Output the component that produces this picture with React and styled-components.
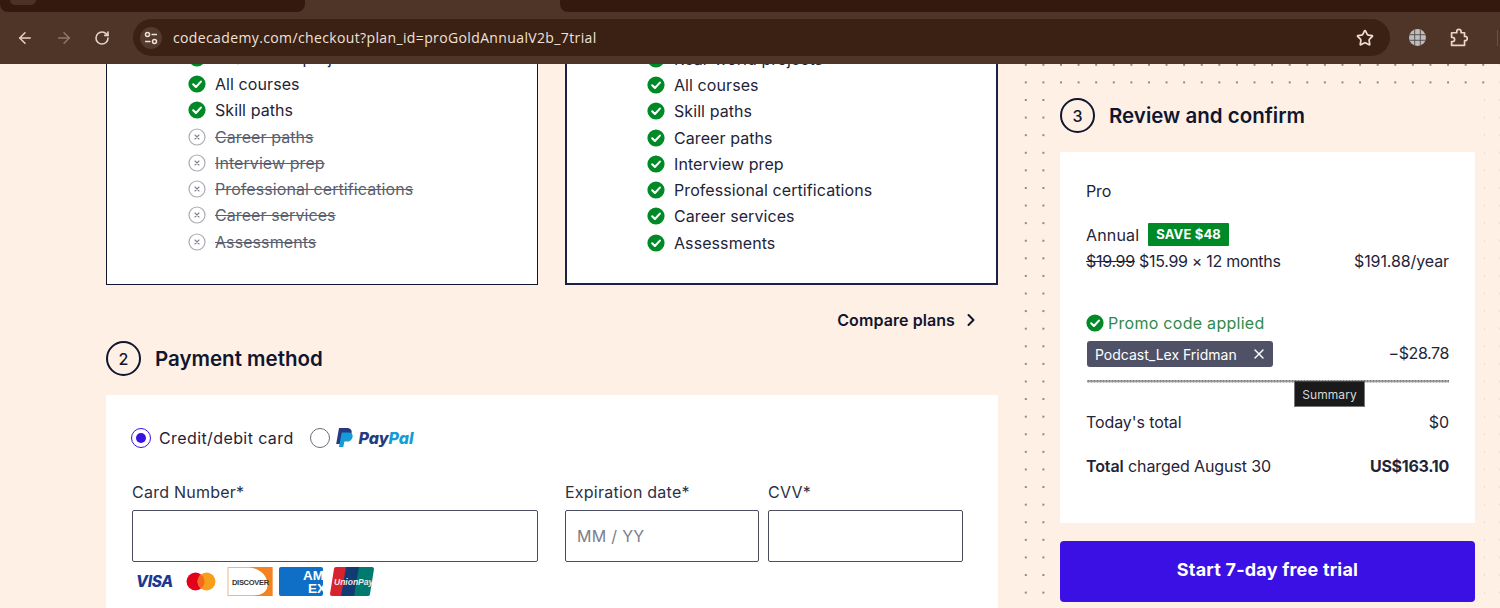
import React from "react";
import styled, { createGlobalStyle } from "styled-components";
import { ArrowLeft, ArrowRight, RotateCw, Star, ChevronRight, X } from "lucide-react";

const GlobalStyle = createGlobalStyle`
    html, body {
        margin: 0;
        height: 608px;
        overflow: hidden;
        background: #fff0e5;
    }
    * {
        box-sizing: border-box;
    }
`;

const Page = styled.div`
    width: 1500px;
    height: 608px;
    overflow: hidden;
    display: flex;
    flex-direction: column;
    font-family: Inter, "Noto Sans", sans-serif;
    font-size: 16px;
    color: #10162f;
`;

const TabStrip = styled.div`
    height: 12px;
    background: #4f3527;
    display: flex;
    flex-shrink: 0;
    overflow: hidden;
`;

const Tab = styled.div`
    width: ${(p) => p.$width}px;
    flex-shrink: 0;
    margin-left: ${(p) => p.$offset || 0}px;
    background: #341a0e;
    border-radius: 0 0 8px 8px;
`;

const TabButton = styled.div`
    width: 26px;
    height: 5px;
    margin-left: 10px;
    border-radius: 0 0 6px 6px;
    background: #4a3224;
`;

const Toolbar = styled.div`
    height: 52px;
    flex-shrink: 0;
    background: #4f3527;
    display: flex;
    align-items: center;
    padding: 0 0 1px 16px;
    color: #e8d3c6;
`;

const NavIcons = styled.div`
    display: flex;
    align-items: center;
    gap: 21px;
    width: 117px;
`;

const Omnibox = styled.div`
    width: 1257px;
    height: 37px;
    border-radius: 19px;
    background: #3b2014;
    display: flex;
    align-items: center;
    padding: 0 16px 0 7px;
    flex-shrink: 0;
`;

const SiteInfo = styled.div`
    width: 22px;
    height: 22px;
    border-radius: 50%;
    background: #533a2d;
    display: flex;
    align-items: center;
    justify-content: center;
    margin-right: 11px;
`;

const Url = styled.div`
    flex: 1;
    font-family: "Open Sans", sans-serif;
    font-size: 14px;
    letter-spacing: 0.37px;
    color: #f0e2d9;
`;

const ToolbarEnd = styled.div`
    display: flex;
    align-items: center;
    gap: 23px;
    padding-left: 19px;
`;

const Divider = styled.div`
    width: 1px;
    height: 16px;
    background: #6b5143;
    margin-left: 6px;
`;

const Content = styled.div`
    flex: 1;
    display: flex;
    min-height: 0;
    overflow: hidden;
`;

const Main = styled.main`
    width: 1017px;
    padding-left: 106px;
    flex-shrink: 0;
`;

const MainInner = styled.div`
    width: 892px;
    margin-top: -19.5px;
`;

const Plans = styled.div`
    display: flex;
    justify-content: space-between;
    height: 240.5px;
`;

const PlanCard = styled.div`
    width: ${(p) => (p.$selected ? 433 : 432)}px;
    background: #fff;
    border: ${(p) => (p.$selected ? 2 : 1)}px solid ${(p) => (p.$selected ? "#1c2146" : "#10162f")};
    border-top: none;
    padding-left: ${(p) => (p.$selected ? 80 : 81)}px;
    padding-top: ${(p) => (p.$selected ? 1 : 0)}px;
`;

const Feature = styled.div`
    height: 26.3px;
    display: flex;
    align-items: center;
    gap: 9px;
    font-size: 16px;
    letter-spacing: 0.08px;
    color: ${(p) => (p.$off ? "#5b5f70" : "#1f2438")};
    text-decoration: ${(p) => (p.$off ? "line-through" : "none")};
`;

const CompareRow = styled.div`
    display: flex;
    justify-content: flex-end;
    align-items: center;
    gap: 6px;
    height: 24px;
    margin-top: 23px;
    padding-right: 17px;
    font-size: 16px;
    font-weight: 600;
    letter-spacing: 0.08px;
`;

const SectionHead = styled.div`
    display: flex;
    align-items: center;
    gap: 14px;
    height: 35px;
    margin-top: ${(p) => p.$top || 0}px;
    font-size: 20.5px;
    font-weight: 600;
`;

const StepCircle = styled.div`
    width: 35px;
    height: 35px;
    border: 2px solid #10162f;
    border-radius: 50%;
    display: flex;
    align-items: center;
    justify-content: center;
    font-size: 16px;
    font-weight: 500;
`;

const PaymentCard = styled.div`
    margin-top: 19px;
    height: 240px;
    background: #fff;
    padding: 33px 26px 0 25px;
`;

const RadioRow = styled.div`
    display: flex;
    align-items: center;
    height: 20px;
`;

const Radio = styled.span`
    width: 20px;
    height: 20px;
    border-radius: 50%;
    flex-shrink: 0;
    display: flex;
    align-items: center;
    justify-content: center;
    border: 1.5px solid ${(p) => (p.$checked ? "#3a10e5" : "#6b6e7d")};
    &::after {
        content: "";
        width: 10px;
        height: 10px;
        border-radius: 50%;
        background: ${(p) => (p.$checked ? "#3a10e5" : "transparent")};
    }
`;

const RadioLabel = styled.span`
    margin: 0 16px 0 8px;
    letter-spacing: 0.4px;
    color: #1f2438;
`;

const PayPalSlot = styled.span`
    margin-left: 5px;
    height: 20px;
`;

const Fields = styled.div`
    display: flex;
    margin: 34px 0 0 1px;
`;

const Field = styled.div`
    display: flex;
    flex-direction: column;
    width: ${(p) => p.$width}px;
    margin-left: ${(p) => p.$gap || 0}px;
`;

const FieldLabel = styled.label`
    height: 20px;
    line-height: 20px;
    margin-bottom: 8px;
    letter-spacing: 0.24px;
    color: #2b3044;
`;

const FakeInput = styled.div`
    height: 52px;
    border: 1px solid #4a4e60;
    border-radius: 2px;
    display: flex;
    align-items: center;
    padding-left: 11px;
    color: #7b7e8b;
    letter-spacing: 0.3px;
`;

const CardLogos = styled.div`
    display: flex;
    align-items: center;
    margin: 5px 0 0 3px;
    height: 29px;
`;

const Aside = styled.aside`
    flex: 1;
    padding: 27px 16px 0 35px;
    background-image: radial-gradient(circle, #8f8781 0.9px, transparent 1.3px);
    background-size: 17.6px 17.6px;
    background-position: 0 -8px;
`;

const Summary = styled.div`
    background: #fff0e5;
    height: 100%;
    padding: 7px 9px 0 8px;
`;

const SummaryCard = styled.div`
    margin-top: 19px;
    height: 371px;
    background: #fff;
    padding: 27px 26px 0 26px;
    letter-spacing: -0.1px;
    color: #1f2438;
`;

const Line = styled.div`
    display: flex;
    justify-content: space-between;
    align-items: center;
    height: 24px;
    margin-top: ${(p) => p.$top || 0}px;
`;

const Price = styled.span`
    letter-spacing: ${(p) => p.$tight || -0.1}px;
`;

const Annual = styled.span`
    display: flex;
    align-items: center;
    letter-spacing: 0.16px;
`;

const Badge = styled.span`
    height: 23px;
    line-height: 22px;
    margin: 0 0 2px 9px;
    padding: 0 8px;
    background: #008a27;
    color: #fff;
    font-size: 13px;
    font-weight: 700;
    border-radius: 1px;
`;

const Promo = styled.div`
    display: flex;
    align-items: center;
    gap: 4px;
    height: 24px;
    margin-top: 38px;
    letter-spacing: 0.28px;
    color: #2f8a4b;
`;

const Chip = styled.span`
    width: 186px;
    height: 26px;
    margin: 2px 0 0 1px;
    display: flex;
    align-items: center;
    justify-content: space-between;
    padding: 0 6px 0 8px;
    border-radius: 3px;
    background: #4f5266;
    color: #fff;
    font-size: 14px;
    letter-spacing: 0;
`;

const DottedRule = styled.div`
    position: relative;
    height: 3px;
    margin: 15px 0 0 1px;
    background-image:
        radial-gradient(circle, #777 0.8px, transparent 1.2px),
        radial-gradient(circle, #777 0.8px, transparent 1.2px);
    background-size: 3px 3px;
    background-position: 0 -1px, 1.5px 0;
`;

const Tooltip = styled.div`
    position: absolute;
    left: 207px;
    top: 1px;
    width: 71px;
    height: 26px;
    display: flex;
    align-items: center;
    justify-content: center;
    background: #1a1a1a;
    border: 1px solid #777;
    border-top-color: #444;
    color: #d8d8d8;
    font-size: 12px;
    letter-spacing: 0.1px;
`;

const TrialButton = styled.button`
    display: block;
    width: 415px;
    height: 61px;
    margin-top: 18px;
    padding: 0 0 4px;
    border: none;
    border-radius: 4px;
    background: #3a10e5;
    color: #fff;
    font-family: inherit;
    font-size: 18px;
    font-weight: 700;
    letter-spacing: 0.2px;
`;

const CheckIcon = () => (
    <svg width="18" height="18" viewBox="0 0 18 18" style={{ flexShrink: 0 }}>
        <circle cx="9" cy="9" r="8.6" fill="#008a27" />
        <path d="M5.2 9.3 7.9 12l5-5.4" fill="none" stroke="#fff" strokeWidth="2.1" strokeLinecap="round" strokeLinejoin="round" />
    </svg>
);

const CrossIcon = () => (
    <svg width="18" height="18" viewBox="0 0 18 18" style={{ flexShrink: 0 }}>
        <circle cx="9" cy="9" r="8" fill="none" stroke="#a9abb3" strokeWidth="1.2" />
        <path d="M7 7l4 4M11 7l-4 4" stroke="#80838f" strokeWidth="1.1" strokeLinecap="round" />
    </svg>
);

const SiteInfoIcon = () => (
    <svg width="14" height="14" viewBox="0 0 14 14" fill="none" stroke="#f0e2d9" strokeWidth="1.5">
        <circle cx="3.5" cy="3.5" r="2" />
        <path d="M7.5 3.5H13M1 10.5h5.5" />
        <circle cx="10.5" cy="10.5" r="2" />
    </svg>
);

const GlobeIcon = () => (
    <svg width="17" height="17" viewBox="0 0 17 17">
        <circle cx="8.5" cy="8.5" r="8.5" fill="#b9bdc4" />
        <path d="M.5 5.7h16M.5 11.3h16M5.7.5v16M11.3.5v16" stroke="#5a4a42" strokeWidth="0.9" />
    </svg>
);

const PuzzleIcon = () => (
    <svg width="19" height="19" viewBox="0 0 20 22" fill="none" stroke="#ecd3c2" strokeWidth="2" strokeLinejoin="round">
        <path d="M2 5.5h6V4a2.5 2.5 0 0 1 5 0v1.5h4v4.200h.7a2.5 2.5 0 0 1 0 5H17V20H2v-4.200h1a2.5 2.5 0 0 0 0-5H2z" />
    </svg>
);

const PayPalLogo = () => (
    <svg width="82" height="20" viewBox="0 0 82 20" aria-label="PayPal">
        <path d="M4 0h7.5c3.7 0 5.7 1.9 5.1 5-.7 3.7-3.4 5.5-7 5.5H7.1L6 16H1.2z" fill="#253b80" />
        <path d="M6.8 4.5h6.7c3.1 0 4.6 1.7 4.1 4.4-.6 3.1-2.9 4.7-5.9 4.7H9.4L8.3 19H3.9z" fill="#179bd7" />
        <text x="23.5" y="16" fontFamily="Inter, sans-serif" fontStyle="italic" fontWeight="800" fontSize="16">
            <tspan fill="#253b80">Pay</tspan>
            <tspan fill="#179bd7">Pal</tspan>
        </text>
    </svg>
);

const PaymentLogos = () => (
    <svg width="242" height="29" viewBox="0 0 242 29">
        <text x="1" y="20" fontFamily="Inter, sans-serif" fontStyle="italic" fontWeight="800" fontSize="15.5" letterSpacing="-.3" fill="#1a3a8f">VISA</text>
        <circle cx="60.5" cy="14.5" r="9" fill="#e2001a" />
        <circle cx="71.5" cy="14.5" r="9" fill="#f79e1b" />
        <path d="M66 7.4a9 9 0 0 1 0 14.2 9 9 0 0 1 0-14.2z" fill="#f26a1d" />
        <rect x="93" y=".5" width="44" height="28" fill="#fff" stroke="#f2b48a" />
        <path d="M114 0h23.5v29H118c9-1 14-4 14.5-10 .3-7-3-16-18.5-19z" fill="#f58220" />
        <text x="97" y="18" fontFamily="Liberation Sans, sans-serif" fontWeight="700" fontSize="7.5" letterSpacing="-.3" fill="#333">DISCOVER</text>
        <rect x="144" width="44" height="29" rx="2" fill="#0f6fc6" />
        <svg x="144" width="44" height="29">
            <text x="45" y="13" textAnchor="end" fontFamily="Liberation Sans, sans-serif" fontWeight="700" fontSize="13.5" fill="#fff">AM</text>
            <text x="47" y="26" textAnchor="end" fontFamily="Liberation Sans, sans-serif" fontWeight="700" fontSize="13.5" fill="#fff">EX</text>
        </svg>
        <path d="M201 0h11l-5 29h-10a2 2 0 0 1-2-2l4-25a2 2 0 0 1 2-2z" fill="#d8232e" />
        <path d="M211 0h14l-5 29h-14z" fill="#123a73" />
        <path d="M224 0h13a2 2 0 0 1 2 2l-4 25a2 2 0 0 1-2 2h-14z" fill="#007a6e" />
        <text x="199" y="18" fontFamily="Liberation Sans, sans-serif" fontStyle="italic" fontWeight="700" fontSize="8.5" fill="#f0e8e8">UnionPay</text>
    </svg>
);

const included = ["All courses", "Skill paths"];
const gated = ["Career paths", "Interview prep", "Professional certifications", "Career services", "Assessments"];

const App = () => (
    <Page>
        <GlobalStyle />
        <TabStrip>
            <Tab $width={305}><TabButton /></Tab>
            <Tab $width={950} $offset={255} />
        </TabStrip>
        <Toolbar>
            <NavIcons>
                <ArrowLeft size={18} />
                <ArrowRight size={18} color="#8f7769" />
                <RotateCw size={16} strokeWidth={2.4} />
            </NavIcons>
            <Omnibox>
                <SiteInfo>
                    <SiteInfoIcon />
                </SiteInfo>
                <Url>codecademy.com/checkout?plan_id=proGoldAnnualV2b_7trial</Url>
                <Star size={18} strokeWidth={2.3} color="#f0dccf" />
            </Omnibox>
            <ToolbarEnd>
                <GlobeIcon />
                <PuzzleIcon />
                <Divider />
            </ToolbarEnd>
        </Toolbar>
        <Content>
            <Main>
                <MainInner>
                    <Plans>
                        <PlanCard>
                            <Feature><CheckIcon />Real-world projects</Feature>
                            {included.map((t) => <Feature key={t}><CheckIcon />{t}</Feature>)}
                            {gated.map((t) => <Feature key={t} $off><CrossIcon />{t}</Feature>)}
                        </PlanCard>
                        <PlanCard $selected>
                            <Feature><CheckIcon />Real-world projects</Feature>
                            {[...included, ...gated].map((t) => <Feature key={t}><CheckIcon />{t}</Feature>)}
                        </PlanCard>
                    </Plans>
                    <CompareRow>Compare plans <ChevronRight size={20} strokeWidth={2.4} /></CompareRow>
                    <SectionHead $top={9}>
                        <StepCircle>2</StepCircle>
                        Payment method
                    </SectionHead>
                    <PaymentCard>
                        <RadioRow>
                            <Radio $checked />
                            <RadioLabel>Credit/debit card</RadioLabel>
                            <Radio />
                            <PayPalSlot><PayPalLogo /></PayPalSlot>
                        </RadioRow>
                        <Fields>
                            <Field $width={406}>
                                <FieldLabel>Card Number*</FieldLabel>
                                <FakeInput />
                                <CardLogos><PaymentLogos /></CardLogos>
                            </Field>
                            <Field $width={194} $gap={27}>
                                <FieldLabel>Expiration date*</FieldLabel>
                                <FakeInput>MM / YY</FakeInput>
                            </Field>
                            <Field $width={195} $gap={9}>
                                <FieldLabel>CVV*</FieldLabel>
                                <FakeInput />
                            </Field>
                        </Fields>
                    </PaymentCard>
                </MainInner>
            </Main>
            <Aside>
                <Summary>
                    <SectionHead>
                        <StepCircle>3</StepCircle>
                        Review and confirm
                    </SectionHead>
                    <SummaryCard>
                        <Line>Pro</Line>
                        <Line $top={20}>
                            <Annual>Annual<Badge>SAVE $48</Badge></Annual>
                        </Line>
                        <Line $top={2}>
                            <Price $tight={-0.3}><s>$19.99</s> $15.99 × 12 months</Price>
                            <Price>$191.88/year</Price>
                        </Line>
                        <Promo><CheckIcon />Promo code applied</Promo>
                        <Line $top={6}>
                            <Chip>Podcast_Lex Fridman <X size={16} /></Chip>
                            <Price $tight={-0.4}>−$28.78</Price>
                        </Line>
                        <DottedRule>
                            <Tooltip>Summary</Tooltip>
                        </DottedRule>
                        <Line $top={27}>
                            <span>Today's total</span>
                            <span>$0</span>
                        </Line>
                        <Line $top={20}>
                            <span><b style={{ fontWeight: 600 }}>Total</b> charged August 30</span>
                            <Price $tight={-0.28}><b style={{ fontWeight: 700 }}>US$163.10</b></Price>
                        </Line>
                    </SummaryCard>
                    <TrialButton>Start 7-day free trial</TrialButton>
                </Summary>
            </Aside>
        </Content>
    </Page>
);

export default App;
